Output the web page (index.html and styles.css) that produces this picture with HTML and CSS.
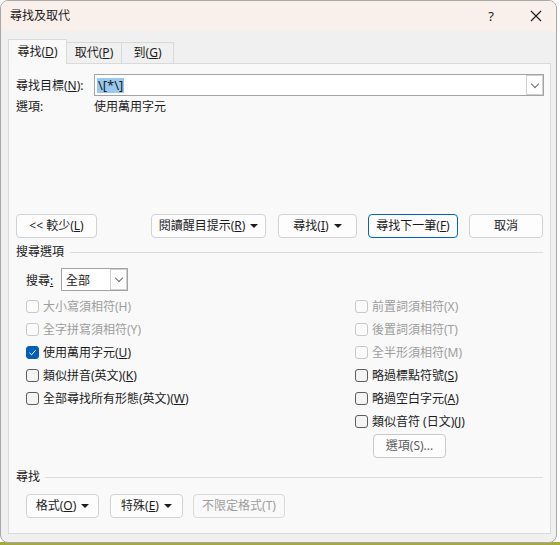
FILE: index.html
```html
<!DOCTYPE html>
<html lang="zh-Hant">
<head>
    <meta charset="UTF-8">
    <meta name="viewport" content="width=device-width, initial-scale=1.0">
    <title>尋找及取代</title>
    <link rel="stylesheet" href="styles.css">
</head>
<body>
    <div class="window">
        <div class="titlebar">
            <span class="title">尋找及取代</span>
            <span class="help">?</span>
            <span class="close">
                <svg width="12" height="12" viewBox="0 0 12 12"><path d="M1 1L11 11M11 1L1 11" stroke="#1b1b1b" stroke-width="1.1" fill="none"/></svg>
            </span>
        </div>

        <div class="body">
            <div class="tabs">
                <div class="tab active"><span>尋找(<u>D</u>)</span></div>
                <div class="tab"><span>取代(<u>P</u>)</span></div>
                <div class="tab"><span>到(<u>G</u>)</span></div>
            </div>

            <div class="panel">
                <div class="find-row">
                    <label class="find-label">尋找目標(<u>N</u>):</label>
                    <div class="combo">
                        <span class="combo-text"><span class="selected">\[*\]</span></span>
                        <span class="combo-btn"><span class="chevron"></span></span>
                    </div>
                </div>
                <div class="options-row">
                    <span class="find-label">選項:</span>
                    <span>使用萬用字元</span>
                </div>

                <div class="button-row">
                    <button class="btn w-less">&lt;&lt; 較少(<u>L</u>)</button>
                    <button class="btn w-reading">閱讀醒目提示(<u>R</u>) <span class="caret"></span></button>
                    <button class="btn w-find">尋找(<u>I</u>) <span class="caret"></span></button>
                    <button class="btn btn-default w-next">尋找下一筆(<u>F</u>)</button>
                    <button class="btn w-cancel">取消</button>
                </div>

                <div class="group-title">
                    <span>搜尋選項</span>
                    <span class="rule"></span>
                </div>

                <div class="search-row">
                    <span class="search-label">搜尋<u>:</u></span>
                    <div class="select">
                        <span class="select-text">全部</span>
                        <span class="combo-btn"><span class="chevron"></span></span>
                    </div>
                </div>

                <div class="checks">
                    <div class="col-left">
                        <div class="check disabled"><span class="box"></span>大小寫須相符(H)</div>
                        <div class="check disabled"><span class="box"></span>全字拼寫須相符(Y)</div>
                        <div class="check"><span class="box checked"><svg width="9" height="9" viewBox="0 0 9 9"><path d="M1.5 4.8L3.6 6.8L7.6 2.2" stroke="#fff" stroke-width="1" fill="none"/></svg></span>使用萬用字元(<u>U</u>)</div>
                        <div class="check"><span class="box"></span>類似拼音(英文)(<u>K</u>)</div>
                        <div class="check"><span class="box"></span>全部尋找所有形態(英文)(<u>W</u>)</div>
                    </div>
                    <div class="col-right">
                        <div class="check disabled"><span class="box"></span>前置詞須相符(X)</div>
                        <div class="check disabled"><span class="box"></span>後置詞須相符(T)</div>
                        <div class="check disabled"><span class="box"></span>全半形須相符(M)</div>
                        <div class="check"><span class="box"></span>略過標點符號(<u>S</u>)</div>
                        <div class="check"><span class="box"></span>略過空白字元(<u>A</u>)</div>
                        <div class="check"><span class="box"></span>類似音符 (日文)(<u>J</u>)</div>
                        <button class="btn btn-muted w-options">選項(S)...</button>
                    </div>
                </div>

                <div class="group-title bottom">
                    <span>尋找</span>
                    <span class="rule"></span>
                </div>

                <div class="format-row">
                    <button class="btn w-format">格式(<u>O</u>) <span class="caret"></span></button>
                    <button class="btn w-special">特殊(<u>E</u>) <span class="caret"></span></button>
                    <button class="btn btn-disabled w-noformat">不限定格式(T)</button>
                </div>
            </div>
        </div>
    </div>
</body>
</html>
```

FILE: styles.css
```css
* { box-sizing: border-box; }
body {
    margin: 0;
    width: 560px;
    height: 545px;
    overflow: hidden;
    font-family: "Noto Sans", "Noto Sans CJK TC", sans-serif;
    font-size: 12px;
    color: #1b1b1b;
    background: linear-gradient(to bottom, #ffffff 542px, #a9a83c 542px);
}
u { text-decoration: underline; text-underline-offset: 1px; }

.window {
    width: 557px;
    height: 543px;
    border: 1px solid #a8a8a8;
    border-radius: 8px;
    background: #f0f0f0;
    overflow: hidden;
}

/* title bar */
.titlebar {
    height: 30px;
    display: flex;
    align-items: center;
    background: #f9f0eb;
    line-height: 16px;
}
.title { padding-left: 9px; font-size: 12px; }
.help { margin-left: auto; width: 36px; text-align: center; margin-right: 9px; font-size: 13px; }
.close { width: 38px; display: flex; justify-content: center; padding-right: 2px; }
.close svg { display: block; }

.body { padding: 8px 5px 0 7px; }

/* tabs */
.tabs {
    display: flex;
    align-items: flex-end;
    height: 24px;
}
.tab {
    height: 21px;
    padding-top: 2px;
    text-align: center;
    white-space: nowrap;
    border: 1px solid #d9d9d9;
    border-bottom: none;
    background: #f0f0f0;
    line-height: 16px;
}
.tab + .tab { border-left: none; }
.tab.active {
    height: 25px;
    margin-bottom: -1px;
    width: 59px;
    background: #f9f9f9;
    position: relative;
    z-index: 1;
    padding-top: 4px;
}
.tab:nth-child(2) { width: 55px; }
.tab:nth-child(3) { width: 52px; }

.panel {
    height: 471px;
    width: 543px;
    border: 1px solid #dadada;
    background: #f9f9f9;
    padding: 10px 6px 0 7px;
}

/* find field */
.find-row {
    display: flex;
    align-items: center;
    height: 22px;
}
.find-label { width: 78px; flex: none; }
.combo {
    flex: 1;
    height: 22px;
    display: flex;
    border: 1px solid #a3a3a3;
    background: #fff;
}
.combo-text {
    flex: 1;
    padding-left: 2px;
    display: flex;
    align-items: center;
    font-size: 13px;
}
.selected { background: #99c9ef; line-height: 15px; padding: 0 1px; }
.combo-btn {
    width: 17px;
    margin: 0;
    border: 1px solid #cfcfcf;
    background: #fff;
    display: flex;
    align-items: center;
    justify-content: center;
}
.chevron {
    width: 6px;
    height: 6px;
    border-right: 1px solid #6a6a6a;
    border-bottom: 1px solid #6a6a6a;
    transform: rotate(45deg);
    margin-top: -3px;
}
.options-row {
    display: flex;
    align-items: center;
    height: 18px;
    margin-top: 1px;
}

/* buttons */
.btn {
    height: 24px;
    border: 1px solid #d2d2d2;
    border-radius: 4px;
    background: #fdfdfd;
    font: inherit;
    color: #1b1b1b;
    padding: 0;
    display: inline-flex;
    align-items: center;
    justify-content: center;
    line-height: 16px;
    white-space: nowrap;
}
.btn-default { border-color: #0067c0; }
.btn-muted { color: #5e5e5e; border-color: #c9c9c9; }
.btn-disabled { color: #9d9d9d; border-color: #d9d9d9; background: #f9f9f9; }
.caret {
    width: 0;
    height: 0;
    margin-left: 5px;
    border-left: 4px solid transparent;
    border-right: 4px solid transparent;
    border-top: 4px solid #1b1b1b;
}
.button-row {
    display: flex;
    margin-top: 99px;
}
.w-less { width: 81px; }
.w-reading { width: 115px; margin-left: 54px; }
.w-find { width: 79px; margin-left: 12px; }
.w-next { width: 90px; margin-left: 11px; }
.w-cancel { width: 74px; margin-left: 11px; }

/* group headers */
.group-title {
    display: flex;
    align-items: center;
    height: 16px;
    margin-top: 6px;
    line-height: 16px;
}
.group-title .rule {
    flex: 1;
    height: 1px;
    background: #dcdcdc;
    margin-left: 6px;
    margin-right: 1px;
}
.group-title.bottom { margin-top: 11px; }
.group-title.bottom .rule { margin-left: 5px; }

.search-row {
    display: flex;
    align-items: center;
    margin-top: 8px;
    padding-left: 10px;
    height: 23px;
}
.search-label { width: 35px; }
.select {
    width: 67px;
    height: 23px;
    display: flex;
    border: 1px solid #a3a3a3;
    background: #fff;
}
.select-text { flex: 1; padding-left: 4px; display: flex; align-items: center; }

/* check boxes */
.checks {
    display: flex;
    margin-top: 4px;
    padding-left: 10px;
}
.col-left { width: 329px; }
.col-right { display: flex; flex-direction: column; align-items: flex-start; }
.check {
    height: 23px;
    display: flex;
    align-items: center;
    line-height: 16px;
}
.box {
    width: 13px;
    height: 13px;
    border: 1px solid #5c5c5c;
    border-radius: 3px;
    background: #f4f4f4;
    margin-right: 4px;
    display: flex;
    align-items: center;
    justify-content: center;
    flex: none;
}
.box.checked { background: #005fb8; border-color: #005fb8; }
.check.disabled { color: #9d9d9d; }
.check.disabled .box { border-color: #c8c8c8; background: #fbfbfb; }
.w-options { width: 73px; margin-left: 18px; margin-top: 1px; }

.format-row {
    display: flex;
    margin-top: 9px;
    padding-left: 10px;
}
.w-format { width: 73px; }
.w-special { width: 73px; margin-left: 11px; }
.w-noformat { width: 92px; margin-left: 10px; }
```
